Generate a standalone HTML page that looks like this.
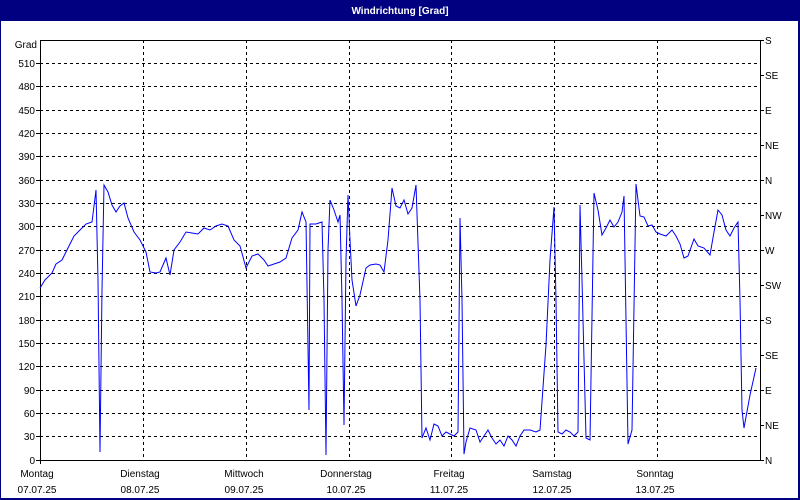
<!DOCTYPE html>
<html><head><meta charset="utf-8"><style>
html,body{margin:0;padding:0;background:#fff;}
body{width:800px;height:500px;overflow:hidden;position:relative;font-family:"Liberation Sans",sans-serif;}
</style></head><body>
<svg width="800" height="500" xmlns="http://www.w3.org/2000/svg" style="position:absolute;left:0;top:0" font-family="Liberation Sans, sans-serif" font-size="10">
<rect x="0" y="0" width="800" height="500" fill="#fff"/>
<rect x="0" y="0" width="800" height="21" fill="#000080"/>
<rect x="0" y="0" width="1" height="500" fill="#000080"/>
<rect x="798" y="0" width="2" height="500" fill="#000080"/>
<rect x="0" y="498" width="800" height="2" fill="#000080"/>
<text x="400" y="14" fill="#fff" text-anchor="middle" font-weight="bold">Windrichtung [Grad]</text>
<g stroke="#000" stroke-width="1" stroke-dasharray="3,3" shape-rendering="crispEdges">
<line x1="40" y1="63.5" x2="757" y2="63.5"/>
<line x1="40" y1="86.5" x2="757" y2="86.5"/>
<line x1="40" y1="110.5" x2="757" y2="110.5"/>
<line x1="40" y1="133.5" x2="757" y2="133.5"/>
<line x1="40" y1="156.5" x2="757" y2="156.5"/>
<line x1="40" y1="180.5" x2="757" y2="180.5"/>
<line x1="40" y1="203.5" x2="757" y2="203.5"/>
<line x1="40" y1="226.5" x2="757" y2="226.5"/>
<line x1="40" y1="250.5" x2="757" y2="250.5"/>
<line x1="40" y1="273.5" x2="757" y2="273.5"/>
<line x1="40" y1="296.5" x2="757" y2="296.5"/>
<line x1="40" y1="320.5" x2="757" y2="320.5"/>
<line x1="40" y1="343.5" x2="757" y2="343.5"/>
<line x1="40" y1="366.5" x2="757" y2="366.5"/>
<line x1="40" y1="390.5" x2="757" y2="390.5"/>
<line x1="40" y1="413.5" x2="757" y2="413.5"/>
<line x1="40" y1="436.5" x2="757" y2="436.5"/>
<line x1="143.5" y1="40" x2="143.5" y2="460"/>
<line x1="246.5" y1="40" x2="246.5" y2="460"/>
<line x1="349.5" y1="40" x2="349.5" y2="460"/>
<line x1="451.5" y1="40" x2="451.5" y2="460"/>
<line x1="554.5" y1="40" x2="554.5" y2="460"/>
<line x1="657.5" y1="40" x2="657.5" y2="460"/>
</g>
<g stroke="#000" stroke-width="1" shape-rendering="crispEdges" fill="none">
<line x1="40" y1="40.5" x2="760" y2="40.5"/>
<line x1="40" y1="460.5" x2="760" y2="460.5"/>
<line x1="40.5" y1="40" x2="40.5" y2="464"/>
<line x1="760.5" y1="40" x2="760.5" y2="461"/>
<path d="M760 40.5h4M760 75.5h4M760 110.5h4M760 145.5h4M760 180.5h4M760 215.5h4M760 250.5h4M760 285.5h4M760 320.5h4M760 355.5h4M760 390.5h4M760 425.5h4M760 460.5h4"/>
<path d="M36 63.5h4M36 86.5h4M36 110.5h4M36 133.5h4M36 156.5h4M36 180.5h4M36 203.5h4M36 226.5h4M36 250.5h4M36 273.5h4M36 296.5h4M36 320.5h4M36 343.5h4M36 366.5h4M36 390.5h4M36 413.5h4M36 436.5h4M36 460.5h4"/>
</g>
<g fill="#000" text-anchor="end">
<text x="37" y="48">Grad</text>
<text x="35" y="67">510</text><text x="35" y="90">480</text><text x="35" y="114">450</text>
<text x="35" y="137">420</text><text x="35" y="160">390</text><text x="35" y="184">360</text>
<text x="35" y="207">330</text><text x="35" y="230">300</text><text x="35" y="254">270</text>
<text x="35" y="277">240</text><text x="35" y="300">210</text><text x="35" y="324">180</text>
<text x="35" y="347">150</text><text x="35" y="370">120</text><text x="35" y="394">90</text>
<text x="35" y="417">60</text><text x="35" y="440">30</text><text x="35" y="464">0</text>
</g>
<g fill="#000">
<text x="765" y="44">S</text><text x="765" y="79">SE</text><text x="765" y="114">E</text>
<text x="765" y="149">NE</text><text x="765" y="184">N</text><text x="765" y="219">NW</text>
<text x="765" y="254">W</text><text x="765" y="289">SW</text><text x="765" y="324">S</text>
<text x="765" y="359">SE</text><text x="765" y="394">E</text><text x="765" y="429">NE</text>
<text x="765" y="464">N</text>
</g>
<g fill="#000" text-anchor="middle">
<text x="37" y="477">Montag</text><text x="37" y="493">07.07.25</text>
<text x="140" y="477">Dienstag</text><text x="140" y="493">08.07.25</text>
<text x="244" y="477">Mittwoch</text><text x="244" y="493">09.07.25</text>
<text x="346" y="477">Donnerstag</text><text x="346" y="493">10.07.25</text>
<text x="449" y="477">Freitag</text><text x="449" y="493">11.07.25</text>
<text x="552" y="477">Samstag</text><text x="552" y="493">12.07.25</text>
<text x="655" y="477">Sonntag</text><text x="655" y="493">13.07.25</text>
</g>
<polyline fill="none" stroke="#0000ff" stroke-width="1" points="40,288 45,280 52,273 56,264 62,260 68,248 74,236 80,230 86,224 92,222 96,190 98,280 100,452 102,290 104,185 108,192 112,205 116,212 120,206 124,203 128,218 134,232 140,240 146,252 150,272 156,273 160,272 166,258 170,275 174,250 180,242 186,232 192,233 198,234 204,228 210,230 216,226 222,224 228,226 234,240 240,246 246,268 252,256 258,254 264,260 268,266 274,264 280,262 286,258 292,238 298,230 302,212 306,222 309,410 310,224 316,224 322,222 324,300 326,455 328,250 330,200 334,210 338,222 340,215 342,300 344,425 346,260 348,195 350,240 352,280 356,306 360,295 366,268 370,265 376,264 380,265 384,272 388,240 392,188 396,206 400,208 404,200 408,214 412,208 416,185 420,300 422,438 426,428 430,440 434,424 438,426 442,436 446,432 450,434 454,436 458,432 460,218 462,300 464,454 466,442 470,428 476,430 480,442 484,436 488,430 492,438 496,444 500,440 504,446 508,436 512,440 516,446 520,436 524,430 530,430 536,432 540,430 546,345 550,260 554,207 556,300 558,432 562,434 566,430 570,432 574,436 578,432 580,205 582,280 586,438 590,440 594,193 598,210 602,235 606,228 610,220 614,227 618,222 622,212 624,196 626,320 628,444 632,430 636,184 640,216 644,217 648,226 652,225 656,232 660,234 666,236 672,230 676,236 680,244 684,258 688,256 694,239 698,246 704,248 710,255 714,232 718,210 722,215 726,230 730,236 734,228 738,222 740,300 742,410 744,428 750,395 756,368"/>
</svg>
</body></html>
